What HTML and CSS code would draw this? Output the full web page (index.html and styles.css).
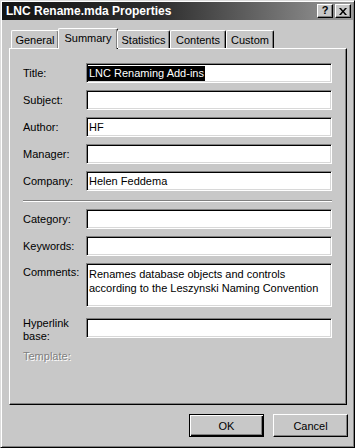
FILE: index.html
```html
<!DOCTYPE html>
<html>
<head>
<meta charset="utf-8">
<link rel="stylesheet" href="styles.css">
</head>
<body>
<div class="window">
  <div class="titlebar">
    <span class="title">LNC Rename.mda Properties</span>
    <div class="caption-buttons">
      <div class="cap-btn help">?</div>
      <div class="cap-btn close">
        <svg width="8" height="7" viewBox="0 0 8 7"><path d="M0 0h2l2 2.5L6 0h2L5 3.5 8 7H6L4 4.5 2 7H0l3-3.5z" fill="#000"/></svg>
      </div>
    </div>
  </div>
  <div class="tabs">
    <div class="tab t-general">General</div>
    <div class="tab active t-summary">Summary</div>
    <div class="tab t-stats">Statistics</div>
    <div class="tab t-contents">Contents</div>
    <div class="tab t-custom">Custom</div>
  </div>
  <div class="panel">
    <div class="row"><div class="label">Title:</div><div class="field"><span class="sel">LNC Renaming Add-ins</span></div></div>
    <div class="row"><div class="label">Subject:</div><div class="field"></div></div>
    <div class="row"><div class="label">Author:</div><div class="field">HF</div></div>
    <div class="row"><div class="label">Manager:</div><div class="field"></div></div>
    <div class="row"><div class="label">Company:</div><div class="field">Helen Feddema</div></div>
    <div class="sep"></div>
    <div class="row"><div class="label">Category:</div><div class="field"></div></div>
    <div class="row"><div class="label">Keywords:</div><div class="field"></div></div>
    <div class="row row-top"><div class="label">Comments:</div><div class="field area">Renames database objects and controls<br>according to the Leszynski Naming Convention</div></div>
    <div class="row row-link"><div class="label two">Hyperlink<br>base:</div><div class="field"></div></div>
    <div class="row-template"><div class="label disabled">Template:</div></div>
  </div>
  <div class="buttons">
    <div class="btn default">OK</div>
    <div class="btn">Cancel</div>
  </div>
</div>
</body>
</html>
```
FILE: styles.css
```css
* { box-sizing: border-box; }
html, body { margin: 0; padding: 0; }
body {
  width: 355px;
  height: 448px;
  background: #c8c8c8;
  font-family: "Liberation Sans", Arial, sans-serif;
  font-size: 11px;
  color: #000;
  overflow: hidden;
}
.window {
  width: 355px;
  height: 448px;
  background: #c8c8c8;
  border: 1px solid;
  border-color: #dcdcdc #000 #000 #dcdcdc;
  box-shadow: inset 1px 1px #fff, inset -1px -1px #808080;
  padding: 1px;
}
.titlebar {
  height: 18px;
  background: linear-gradient(to right, #141414 0%, #2e2e2e 45%, #9a9a9a 100%);
  display: flex;
  align-items: center;
  justify-content: space-between;
  padding: 0 2px 0 4px;
}
.title {
  color: #fff;
  font-weight: bold;
  font-size: 12px;
  white-space: nowrap;
}
.caption-buttons { display: flex; gap: 2px; }
.cap-btn {
  width: 16px;
  height: 14px;
  background: #c8c8c8;
  border: 1px solid;
  border-color: #fff #000 #000 #fff;
  box-shadow: inset -1px -1px #808080;
  display: flex;
  align-items: center;
  justify-content: center;
  font-weight: bold;
  font-size: 11px;
  line-height: 1;
}
.help { padding-bottom: 1px; }
.tabs {
  display: flex;
  align-items: flex-end;
  height: 28px;
  padding-left: 9px;
  position: relative;
  z-index: 1;
}
.tab {
  height: 18px;
  border-top: 1px solid #fff;
  border-left: 1px solid #fff;
  border-right: 1px solid #000;
  box-shadow: inset -1px 0 #808080;
  border-radius: 2px 2px 0 0;
  display: flex;
  align-items: center;
  justify-content: center;
  background: #c8c8c8;
  padding-top: 1px;
}
.t-general { width: 48px; }
.t-summary { width: 60px; }
.t-stats { width: 53px; }
.t-contents { width: 56px; }
.t-custom { width: 48px; }
.tab.active {
  height: 21px;
  margin: 0 -1px -1px -1px;
  padding-top: 0;
  padding-bottom: 2px;
}
.panel {
  margin: 0 6px 0 7px;
  height: 357px;
  border: 1px solid;
  border-color: #fff #000 #000 #fff;
  box-shadow: inset -1px -1px #808080;
  padding: 14px 14px 0 13px;
  display: flex;
  flex-direction: column;
}
.row {
  display: flex;
  align-items: center;
  height: 20px;
  margin-bottom: 7px;
}
.label {
  width: 63px;
  flex: none;
  white-space: nowrap;
}
.field {
  flex: 1;
  height: 20px;
  background: #fff;
  border: 1px solid;
  border-color: #808080 #fff #fff #808080;
  box-shadow: inset 1px 1px #000, inset -1px -1px #d8d8d8;
  padding: 0 2px;
  display: flex;
  align-items: center;
  white-space: nowrap;
  overflow: hidden;
}
.sel {
  background: #000;
  color: #fff;
  padding: 1px;
  margin-left: -1px;
  line-height: 13px;
}
.sep {
  height: 2px;
  border-top: 1px solid #808080;
  border-bottom: 1px solid #fff;
  margin: 2px 0 7px 0;
}
.row-top {
  align-items: flex-start;
  height: 44px;
  margin-bottom: 11px;
}
.row-top .label { padding-top: 3px; }
.area {
  height: 44px;
  display: block;
  line-height: 14px;
  padding-top: 3px;
}
.row-link { margin-bottom: 0; }
.two { line-height: 13px; margin-top: 4px; }
.row-template { margin-top: 12px; }
.disabled {
  color: #808080;
  text-shadow: 1px 1px #fff;
}
.buttons {
  display: flex;
  justify-content: flex-end;
  gap: 9px;
  padding: 9px 5px 0 0;
}
.btn {
  width: 75px;
  height: 23px;
  border: 1px solid;
  border-color: #fff #000 #000 #fff;
  box-shadow: inset -1px -1px #808080;
  display: flex;
  align-items: center;
  justify-content: center;
}
.btn.default {
  border: 1px solid #000;
  box-shadow: inset 1px 1px #fff, inset -1px -1px #000, inset -2px -2px #808080;
}
```
